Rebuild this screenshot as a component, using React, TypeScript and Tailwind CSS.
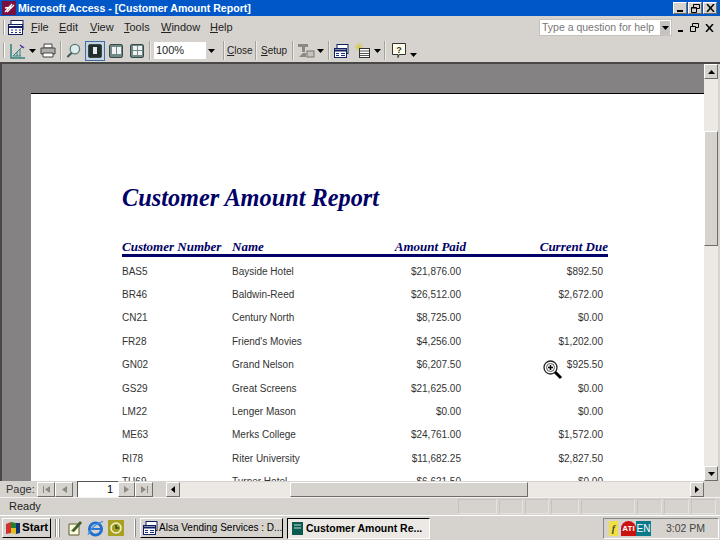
import React from 'react';

const FONT = "[font-family:'Liberation_Sans',Arial,sans-serif]";

const rows = [
    ['BAS5', 'Bayside Hotel', '$21,876.00', '$892.50'],
    ['BR46', 'Baldwin-Reed', '$26,512.00', '$2,672.00'],
    ['CN21', 'Century North', '$8,725.00', '$0.00'],
    ['FR28', "Friend's Movies", '$4,256.00', '$1,202.00'],
    ['GN02', 'Grand Nelson', '$6,207.50', '$925.50'],
    ['GS29', 'Great Screens', '$21,625.00', '$0.00'],
    ['LM22', 'Lenger Mason', '$0.00', '$0.00'],
    ['ME63', 'Merks College', '$24,761.00', '$1,572.00'],
    ['RI78', 'Riter University', '$11,682.25', '$2,827.50'],
    ['TU69', 'Turner Hotel', '$6,621.50', '$0.00'],
];

const Arrow = () => (
    <svg width="7" height="4" viewBox="0 0 7 4" className="shrink-0"><path d="M0 0h7L3.5 4z" fill="#000" /></svg>
);

const Sep: React.FC<{ className?: string }> = ({ className = '' }) => (
    <div className={`w-[2px] h-[19px] shrink-0 border-l border-[#a5a29c] border-r border-r-[#eeeae6] ${className}`} />
);

const raised = 'border border-t-white border-l-white border-r-[#6f6d68] border-b-[#6f6d68] bg-[#d6d3ce]';

const SmallBtn: React.FC<{ children: React.ReactNode; w?: string }> = ({ children, w = 'w-[16px]' }) => (
    <div className={`${raised} ${w} h-[15px] flex items-center justify-center shrink-0`}>{children}</div>
);

const Dither = ({ className }: { className: string }) => (
    <div className={`${className} bg-[#ece9e4] bg-[radial-gradient(#c4c1bc_0.6px,transparent_0.7px)] bg-[length:2px_2px]`} />
);

const ViewIcon: React.FC<{ dark?: boolean; children: React.ReactNode }> = ({ dark, children }) => (
    <div className={`w-[14px] h-[14px] rounded-[2px] border border-[#3a4a48] flex items-center justify-center gap-px ${dark ? 'bg-[#20302e]' : 'bg-[#6f8a86]'}`}>
        {children}
    </div>
);

const Page = () => <div className="w-[4px] h-[7px] bg-white/90" />;

// page buttons are greyed out in the reference
const NavIcon: React.FC<{ d: string }> = ({ d }) => (
    <svg width="9" height="7" viewBox="0 0 9 7"><path d={d} fill="#8a8880" /></svg>
);

const TableIcon = () => (
    <>
        <rect x="3" y="0.5" width="11" height="9" fill="#fff" stroke="#102060" />
        <rect x="0.5" y="4.5" width="12" height="9" fill="#fff" stroke="#102060" />
        <path d="M1 6.5h11" stroke="#102060" strokeWidth="2" />
        <path d="M2 9.5h3M7 9.5h4M2 11.5h3M7 11.5h4" stroke="#203080" />
    </>
);

const App: React.FC = () => {
    return (
        <div className={`w-[720px] h-[540px] flex flex-col overflow-hidden bg-[#d6d3ce] text-black ${FONT} relative`}>
            {/* Title bar */}
            <div className="h-[16px] bg-[#0058c8] flex items-center pl-[2px] pr-[3px] shrink-0">
                <svg width="14" height="14" viewBox="0 0 14 14" className="mr-[2px]">
                    <rect width="14" height="14" fill="#7a1040" />
                    <path d="M3 11 L10 3 M5 11 L12 4 M3 7 L10 6" stroke="#fff" strokeWidth="1.4" />
                </svg>
                <span className="text-white font-bold text-[10.6px] leading-none flex-1">Microsoft Access - [Customer Amount Report]</span>
                <div className="flex gap-px text-[9px] font-bold leading-none">
                    <div className={`${raised} w-[14px] h-[12px] flex items-end justify-center pb-px`}><div className="w-[6px] h-[2px] bg-black" /></div>
                    <div className={`${raised} w-[14px] h-[12px] flex items-center justify-center`}>
                        <svg width="9" height="9" viewBox="0 0 9 9" fill="none" stroke="#000"><path d="M2.5 3V.5h6v4H6M.5 3.5h5v5h-5z M.5 4h5" /></svg>
                    </div>
                    <div className={`${raised} w-[14px] h-[12px] flex items-center justify-center`}>
                        <svg width="9" height="8" viewBox="0 0 9 8" stroke="#000" strokeWidth="1.5"><path d="M1 0l7 8M8 0L1 8" /></svg>
                    </div>
                </div>
            </div>

            {/* Menu bar */}
            <div className="h-[23px] flex items-center shrink-0 pl-[3px]">
                <div className="w-[2px] h-[15px] border-l border-[#a5a29c] border-r border-r-white mr-[3px]" />
                <svg width="16" height="15" viewBox="0 0 16 15" className="mr-[7px]">
                    <rect x="3" y="0.5" width="12" height="9" fill="#fff" stroke="#102060" />
                    <rect x="0.5" y="4.5" width="14" height="10" fill="#fff" stroke="#102060" />
                    <path d="M1 7h13" stroke="#102060" strokeWidth="2" />
                    <path d="M3 10h2M7 10h2M11 10h2M3 12.5h2M7 12.5h2M11 12.5h2" stroke="#203080" />
                </svg>
                <div className="flex text-[11px] text-[#222] leading-none">
                    <span className="w-[28px]"><u>F</u>ile</span>
                    <span className="w-[31px]"><u>E</u>dit</span>
                    <span className="w-[34px]"><u>V</u>iew</span>
                    <span className="w-[37px]"><u>T</u>ools</span>
                    <span className="w-[49px]"><u>W</u>indow</span>
                    <span><u>H</u>elp</span>
                </div>
                <div className="ml-auto flex items-center">
                    <div className="w-[133px] h-[17px] bg-white border border-[#c6c3be] flex items-center justify-between pl-[2px] pr-px">
                        <span className="text-[10.5px] text-[#777] leading-none whitespace-nowrap">Type a question for help</span>
                        <div className="w-[10px] h-[14px] bg-[#c6c3be] flex items-center justify-center"><Arrow /></div>
                    </div>
                    <div className="w-[48px] flex items-center justify-between px-[6px]">
                        <div className="w-[5px] h-[2px] bg-black mt-[7px]" />
                        <svg width="9" height="9" viewBox="0 0 9 9" fill="none" stroke="#000"><path d="M2.5 3V.5h6v4H6M.5 3.5h5v5h-5z" /></svg>
                        <svg width="9" height="8" viewBox="0 0 9 8" stroke="#000" strokeWidth="1.5"><path d="M1 0l7 8M8 0L1 8" /></svg>
                    </div>
                </div>
            </div>

            {/* Toolbar */}
            <div className="h-[23px] flex items-center shrink-0 pl-[3px] text-[10px] text-[#222] leading-none">
                <div className="w-[2px] h-[15px] border-l border-[#a5a29c] border-r border-r-white mr-[5px]" />
                <svg width="16" height="16" viewBox="0 0 16 16" className="shrink-0">
                    <path d="M1 1v14h14" fill="none" stroke="#308080" strokeWidth="1.5" />
                    <path d="M3 13L13 3M3 13h8M7 9v4M10 6v7" stroke="#308080" fill="none" />
                    <path d="M10 2l4 3" stroke="#6030a0" strokeWidth="1.5" />
                </svg>
                <div className="ml-[3px]"><Arrow /></div>
                <svg width="16" height="15" viewBox="0 0 16 15" className="ml-[4px] shrink-0">
                    <path d="M4 1h8v4H4z" fill="#fff" stroke="#444" />
                    <path d="M1 5h14v6H1z" fill="#b0aeaa" stroke="#444" />
                    <path d="M3 10h10v4H3z" fill="#fff" stroke="#444" />
                </svg>
                <Sep className="ml-[4px]" />
                <svg width="15" height="16" viewBox="0 0 16 16" className="ml-[4px] shrink-0">
                    <circle cx="9.5" cy="6" r="5" fill="#dfeaea" stroke="#5a7a78" strokeWidth="1.4" />
                    <path d="M6 10L1.5 14.5" stroke="#3a5a58" strokeWidth="2.2" />
                </svg>
                <div className="w-[20px] h-[20px] ml-[4px] bg-[#c8d4e0] border border-[#3c6ea8] flex items-center justify-center shrink-0">
                    <ViewIcon dark><Page /></ViewIcon>
                </div>
                <div className="w-[20px] h-[20px] flex items-center justify-center ml-px shrink-0">
                    <ViewIcon><Page /><Page /></ViewIcon>
                </div>
                <div className="w-[20px] h-[20px] flex items-center justify-center ml-px shrink-0">
                    <ViewIcon><div className="grid grid-cols-2 gap-px"><div className="w-[4px] h-[4px] bg-white/90" /><div className="w-[4px] h-[4px] bg-white/90" /><div className="w-[4px] h-[4px] bg-white/90" /><div className="w-[4px] h-[4px] bg-white/90" /></div></ViewIcon>
                </div>
                <Sep className="ml-[2px]" />
                <div className="w-[62px] h-[17px] bg-white flex items-center justify-between ml-[3px] pl-[2px] shrink-0">
                    <span className="text-[11px]">100%</span>
                    <div className="w-[10px] h-[17px] bg-[#d6d3ce] flex items-center justify-center"><Arrow /></div>
                </div>
                <Sep className="ml-[7px]" />
                <span className="ml-[2px] w-[26px] shrink-0"><u>C</u>lose</span>
                <Sep className="ml-[2px]" />
                <span className="ml-[4px] w-[27px] shrink-0"><u>S</u>etup</span>
                <Sep className="ml-[4px]" />
                <svg width="18" height="16" viewBox="0 0 18 16" className="ml-[3px] shrink-0">
                    <path d="M1 1h10v3H8v5H5V4H1z" fill="#8a8880" />
                    <path d="M2 14l4-4h3v4z" fill="#8a8880" />
                    <rect x="10" y="8" width="7" height="6" fill="#c6c3be" stroke="#77756f" />
                </svg>
                <div className="ml-[2px]"><Arrow /></div>
                <Sep className="ml-[4px]" />
                <svg width="15" height="14" viewBox="0 0 15 14" className="ml-[4px] shrink-0"><TableIcon /></svg>
                <svg width="15" height="15" viewBox="0 0 15 15" className="ml-[6px] shrink-0">
                    <path d="M4 0v8M0 4h8M1 1l6 6M7 1L1 7" stroke="#d8c840" />
                    <rect x="4.5" y="5.5" width="10" height="9" fill="#fff" stroke="#333" />
                    <path d="M5 8h9M5 10.5h9M5 12.5h9" stroke="#555" />
                </svg>
                <div className="ml-[4px]"><Arrow /></div>
                <Sep className="ml-[3px]" />
                <svg width="14" height="16" viewBox="0 0 14 16" className="ml-[6px] shrink-0">
                    <path d="M.5.5h13v11H7l-1 3v-3H.5z" fill="#fffde8" stroke="#333" />
                    <text x="7" y="9.5" textAnchor="middle" fontSize="9" fontWeight="bold" fill="#333">?</text>
                </svg>
                <div className="ml-[4px] mt-[8px]"><Arrow /></div>
            </div>

            {/* Report area */}
            <div className="flex-1 min-h-0 flex border-t-2 border-[#4a4846]">
                <div className="flex-1 min-w-0 bg-[#858284] border-l-2 border-[#4a4846] pl-[29px] pt-[29px] overflow-hidden">
                    <div className="bg-white border-t border-black h-[600px] pl-[91px] pt-[91px]">
                        <div className="[font-family:'Liberation_Serif',serif] italic font-bold text-[#000066] text-[24.3px] leading-[26px] whitespace-nowrap">
                            Customer Amount Report
                        </div>
                        <div className="w-[486px] mt-[27px] h-[16px] flex items-center [font-family:'Liberation_Serif',serif] italic font-bold text-[#000066] text-[13px] leading-none">
                            <span className="w-[110px]">Customer Number</span>
                            <span className="w-[100px]">Name</span>
                            <span className="w-[134px] text-right">Amount Paid</span>
                            <span className="flex-1 text-right">Current Due</span>
                        </div>
                        <div className="w-[486px] h-[3px] bg-[#000066]" />
                        <div className="pt-[3px]">
                            {rows.map((r) => (
                                <div key={r[0]} className="w-[481px] h-[23.4px] flex items-center text-[10px] text-[#333] leading-none">
                                    <span className="w-[110px]">{r[0]}</span>
                                    <span className="w-[100px]">{r[1]}</span>
                                    <span className="w-[129px] text-right">{r[2]}</span>
                                    <span className="flex-1 text-right">{r[3]}</span>
                                </div>
                            ))}
                        </div>
                    </div>
                </div>
                <div className="w-[14px] mr-[2px] flex flex-col shrink-0">
                    <SmallBtn w="w-[14px]"><svg width="7" height="4" viewBox="0 0 7 4"><path d="M3.5 0L7 4H0z" /></svg></SmallBtn>
                    <Dither className="h-[52px]" />
                    <div className={`${raised} h-[115px]`} />
                    <Dither className="flex-1" />
                    <SmallBtn w="w-[14px]"><Arrow /></SmallBtn>
                </div>
            </div>

            {/* Page navigation and horizontal scrollbar */}
            <div className="h-[16px] flex items-center shrink-0 pr-[16px] bg-[#d6d3ce]">
                <span className="text-[11px] text-[#333] ml-[6px] w-[31px] leading-none">Page:</span>
                <SmallBtn w="w-[18px]"><NavIcon d="M1 0h1v7H1zM8 0v7L3 3.5z" /></SmallBtn>
                <SmallBtn w="w-[18px]"><NavIcon d="M7 0v7L2 3.5z" /></SmallBtn>
                <div className="w-[41px] h-[16px] ml-[4px] bg-white border-t border-l border-[#555] text-[11px] text-right pr-[5px] leading-[15px] shrink-0">1</div>
                <SmallBtn w="w-[17px]"><NavIcon d="M2 0v7l5-3.5z" /></SmallBtn>
                <SmallBtn w="w-[18px]"><NavIcon d="M1 0v7l5-3.5zM7 0h1v7H7z" /></SmallBtn>
                <div className="w-[13px] shrink-0" />
                <SmallBtn w="w-[14px]"><svg width="4" height="7" viewBox="0 0 4 7"><path d="M0 3.5L4 0v7z" /></svg></SmallBtn>
                <Dither className="w-[110px] h-[15px] shrink-0" />
                <div className={`${raised} w-[238px] h-[15px] shrink-0`} />
                <Dither className="flex-1 h-[15px]" />
                <SmallBtn w="w-[14px]"><svg width="4" height="7" viewBox="0 0 4 7"><path d="M4 3.5L0 0v7z" /></svg></SmallBtn>
            </div>

            {/* Status bar */}
            <div className="h-[18px] flex items-center shrink-0 border-t border-white/70 text-[11px] text-[#222] pr-[2px]">
                <span className="ml-[9px] w-[473px] leading-none">Ready</span>
                {[39, 24, 24, 28, 54, 25, 25, 25].map((w, i) => (
                    <div key={i} style={{ width: w }} className="h-[15px] mr-[2px] border border-[#c6c3be] border-b-[#e6e3de] border-r-[#e6e3de] shrink-0" />
                ))}
            </div>

            {/* Taskbar */}
            <div className="h-[25px] flex items-center shrink-0 border-t border-white bg-[#d6d3ce] pl-[2px]">
                <div className={`${raised} border-r-black border-b-black w-[49px] h-[20px] flex items-center pl-[2px] text-[11.5px] font-bold leading-none shrink-0`}>
                    <svg width="16" height="14" viewBox="0 0 16 14" className="mr-px shrink-0">
                        <path d="M1 3l5-2v11l-5 1z" fill="#d03030" />
                        <path d="M6 1l5 1v5H6z" fill="#208030" />
                        <path d="M6 7h5v6l-5-1z" fill="#e0c020" />
                        <path d="M11 2h4v10l-4 1z" fill="#103070" />
                    </svg>
                    Start
                </div>
                <div className="w-[2px] h-[18px] ml-[4px] border-l border-[#888] border-r border-r-white shrink-0" />
                <div className="w-[2px] h-[18px] ml-px mr-[7px] border-l border-white border-r border-r-[#888] shrink-0" />
                <svg width="16" height="16" viewBox="0 0 16 16" className="shrink-0">
                    <path d="M2 4h10v11H2z" fill="#fffde0" stroke="#5a5a30" />
                    <path d="M4 11L13 1l2 2-8 9z" fill="#406030" />
                </svg>
                <svg width="17" height="17" viewBox="0 0 18 17" className="ml-[4px] shrink-0">
                    <ellipse cx="9" cy="9" rx="6.5" ry="6.5" fill="none" stroke="#2070d0" strokeWidth="3" />
                    <path d="M3 9h12" stroke="#2070d0" strokeWidth="2" />
                    <path d="M1 15C4 9 10 3 17 1" stroke="#4090e0" fill="none" strokeWidth="1.3" />
                </svg>
                <svg width="16" height="16" viewBox="0 0 16 16" className="ml-[4px] shrink-0">
                    <rect width="16" height="16" fill="#a8a020" />
                    <circle cx="8" cy="8" r="5" fill="none" stroke="#f0f0d0" strokeWidth="1.5" />
                    <path d="M8 5v3h3" fill="none" stroke="#205020" strokeWidth="1.5" />
                </svg>
                <div className="w-[2px] h-[18px] ml-[10px] border-l border-white border-r border-r-[#888] shrink-0" />
                <div className={`${raised} border-r-black border-b-black ml-[4px] w-[143px] h-[20px] flex items-center pl-[2px] text-[10px] leading-none whitespace-nowrap overflow-hidden shrink-0`}>
                    <svg width="15" height="14" viewBox="0 0 15 14" className="mr-px shrink-0"><TableIcon /></svg>
                    Alsa Vending Services : D...
                </div>
                <div className="ml-[4px] w-[143px] h-[21px] flex items-center pl-[4px] text-[10.5px] font-bold leading-none border border-t-black border-l-black border-r-white border-b-white bg-[#ece9e4] whitespace-nowrap overflow-hidden shrink-0">
                    <svg width="11" height="13" viewBox="0 0 11 13" className="mr-[3px] shrink-0">
                        <rect width="11" height="13" fill="#0a5a50" />
                        <path d="M2 3h7M2 6h7" stroke="#c0e0d8" />
                    </svg>
                    Customer Amount Re...
                </div>
                <div className="ml-auto w-[116px] h-[21px] mr-px border border-t-[#888] border-l-[#888] border-r-white border-b-white flex items-center pl-[5px] text-[10.5px] text-[#444] leading-none">
                    <div className="w-[9px] h-[15px] bg-[#f0e040] text-[10px] font-bold text-center leading-[15px] mr-[3px] [font-family:'Liberation_Serif',serif] italic">f</div>
                    <div className="w-[15px] h-[15px] bg-[#cc1111] rounded-t-[8px] text-white text-[8px] font-bold text-center leading-[15px]">ATI</div>
                    <div className="w-[15px] h-[15px] bg-[#0a7a8a] text-white text-[10px] text-center leading-[15px]">EN</div>
                    <span className="ml-auto mr-[13px]">3:02 PM</span>
                </div>
            </div>

            {/* Magnifier cursor over the preview */}
            <svg width="20" height="20" viewBox="0 0 20 20" className="absolute left-[543px] top-[360px]">
                <circle cx="7.5" cy="7.5" r="6.5" fill="#fff" stroke="#222" strokeWidth="1.3" />
                <circle cx="7.5" cy="7.5" r="4" fill="none" stroke="#555" />
                <path d="M5 7.5h5M7.5 5v5" stroke="#000" strokeWidth="1.5" />
                <path d="M12 12l6 6" stroke="#000" strokeWidth="3" />
            </svg>
        </div>
    );
};

export default App;
